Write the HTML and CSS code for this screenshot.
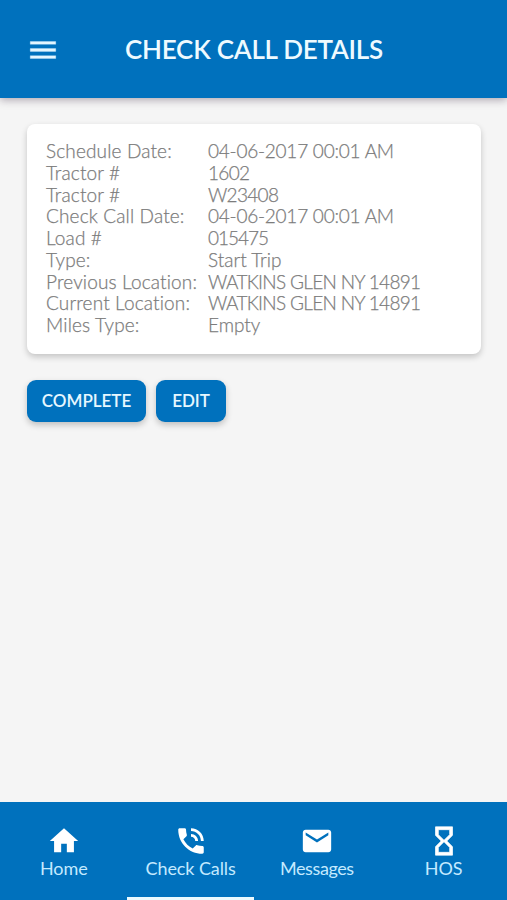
FILE: index.html
```html
<!DOCTYPE html>
<html lang="en">
<head>
<meta charset="utf-8">
<title>Check Call Details</title>
<link rel="stylesheet" href="styles.css">
</head>
<body>
<div class="app">
  <header class="header">
    <svg class="menu" viewBox="0 0 24 24"><path d="M3 18h18v-2H3v2zm0-5h18v-2H3v2zm0-7v2h18V6H3z"/></svg>
    <h1 class="title">CHECK CALL DETAILS</h1>
  </header>
  <main class="content">
    <dl class="card">
      <dt>Schedule Date:</dt><dd class="date">04-06-2017 00:01 AM</dd>
      <dt>Tractor #</dt><dd class="number">1602</dd>
      <dt>Tractor #</dt><dd class="number">W23408</dd>
      <dt>Check Call Date:</dt><dd class="date">04-06-2017 00:01 AM</dd>
      <dt>Load #</dt><dd class="number load">015475</dd>
      <dt>Type:</dt><dd>Start Trip</dd>
      <dt>Previous Location:</dt><dd class="place">WATKINS GLEN NY 14891</dd>
      <dt>Current Location:</dt><dd class="place">WATKINS GLEN NY 14891</dd>
      <dt>Miles Type:</dt><dd>Empty</dd>
    </dl>
    <div class="actions">
      <button class="button complete">COMPLETE</button>
      <button class="button edit">EDIT</button>
    </div>
  </main>
  <nav class="tabs">
    <a class="tab home"><svg class="icon" viewBox="0 0 24 24"><path d="M10 20v-6h4v6h5v-8h3L12 3 2 12h3v8z"/></svg><span>Home</span></a>
    <a class="tab active"><svg class="icon" viewBox="0 0 24 24"><path d="M20 15.5c-1.25 0-2.45-.2-3.57-.57-.35-.11-.74-.03-1.02.24l-2.2 2.2c-2.83-1.44-5.15-3.75-6.59-6.59l2.2-2.21c.28-.26.36-.65.25-1C8.7 6.45 8.5 5.25 8.5 4c0-.55-.45-1-1-1H4c-.55 0-1 .45-1 1 0 9.39 7.61 17 17 17 .55 0 1-.45 1-1v-3.5c0-.55-.45-1-1-1zM19 12h2c0-4.97-4.03-9-9-9v2c3.87 0 7 3.13 7 7zm-4 0h2c0-2.76-2.24-5-5-5v2c1.66 0 3 1.34 3 3z"/></svg><span>Check Calls</span></a>
    <a class="tab messages"><svg class="icon" viewBox="0 0 24 24"><path d="M20 4H4c-1.1 0-1.99.9-1.99 2L2 18c0 1.1.9 2 2 2h16c1.1 0 2-.9 2-2V6c0-1.1-.9-2-2-2zm0 4l-8 5-8-5V6l8 5 8-5v2z"/></svg><span>Messages</span></a>
    <a class="tab"><svg class="icon hourglass" viewBox="0 0 24 24"><path d="M6 2v6h.01L6 8.01 10 12l-4 4 .01.01H6V22h12v-5.99h-.01L18 16l-4-4 4-3.99-.01-.01H18V2H6zm10 14.5V20H8v-3.5l4-4 4 4zm-4-5l-4-4V4h8v3.5l-4 4z"/></svg><span>HOS</span></a>
  </nav>
</div>
</body>
</html>
```
FILE: styles.css
```css
* { box-sizing: border-box; }
body {
  margin: 0;
  background: #f5f5f5;
  font-family: "Lato", "Open Sans", sans-serif;
  font-variant-ligatures: none;
}
.app {
  height: 900px;
  display: flex;
  flex-direction: column;
}
.header {
  height: 98px;
  display: flex;
  align-items: center;
  padding-left: 26px;
  background: #0071bd;
  box-shadow: 0 2px 8px rgba(40, 20, 50, 0.35);
}
.menu {
  width: 34px;
  height: 34px;
  margin-top: 2px;
  fill: #e3f6ff;
  stroke: #e3f6ff;
  stroke-width: 0.2;
}
.title {
  margin: 0 0 1px 65px;
  color: #eefaff;
  font-size: 26px;
  font-weight: 600;
  line-height: 32px;
  letter-spacing: -0.23px;
  white-space: nowrap;
}
.content {
  flex: 1;
  padding: 26px 26px 0 27px;
}
.card {
  height: 230px;
  margin: 0;
  padding: 16px 19px;
  display: grid;
  grid-template-columns: 162px 1fr;
  grid-auto-rows: 21.75px;
  align-content: start;
  border-radius: 8px;
  background: #fff;
  box-shadow: 0 3px 6px rgba(0, 0, 0, 0.2);
  color: #7c7c7c;
  font-size: 19px;
  font-weight: 300;
  line-height: 21.75px;
  -webkit-text-stroke: 0.25px #7c7c7c;
  white-space: nowrap;
}
.card dt { letter-spacing: 0.15px; }
.card dd { margin: 0; }
.card .date { letter-spacing: -0.23px; }
.card .number { letter-spacing: -0.7px; }
.card .load { letter-spacing: -1px; }
.card .place { letter-spacing: -0.68px; }
.actions {
  display: flex;
  gap: 10px;
  margin-top: 26px;
}
.button {
  height: 42px;
  padding: 0;
  border: 0;
  border-radius: 9px;
  background: #0071bd;
  box-shadow: 0 3px 6px rgba(0, 0, 0, 0.22);
  color: #e6f7ff;
  font: 600 17px/42px "Lato", "Open Sans", sans-serif;
}
.complete { width: 119px; }
.edit { width: 70px; }
.tabs {
  height: 98px;
  display: grid;
  grid-template-columns: repeat(4, 1fr);
  background: #0071bd;
}
.tab {
  display: flex;
  flex-direction: column;
  align-items: center;
  padding-top: 22px;
  color: #c4eaff;
  font-size: 18px;
  line-height: 20px;
  white-space: nowrap;
}
.home { padding-left: 1px; }
.active {
  padding-left: 1px;
  border-bottom: 3px solid #eafaff;
  letter-spacing: -0.1px;
}
.messages { letter-spacing: -0.4px; }
.icon {
  width: 34px;
  height: 34px;
  fill: #fff;
}
.hourglass {
  stroke: #fff;
  stroke-width: 0.5;
}
```
